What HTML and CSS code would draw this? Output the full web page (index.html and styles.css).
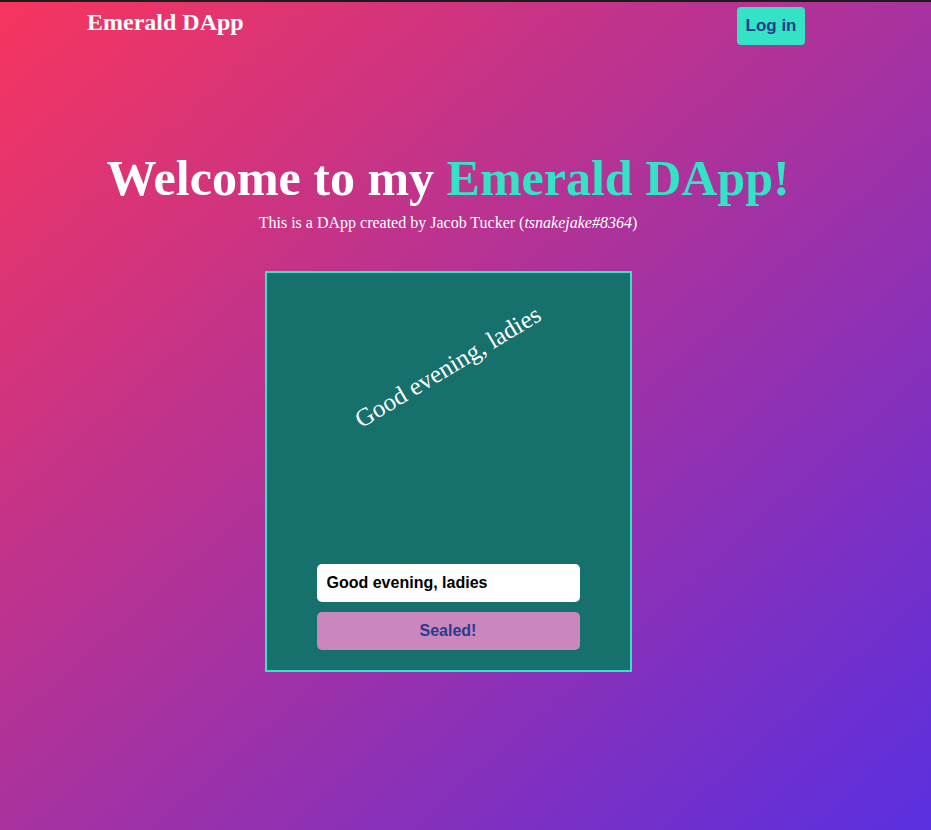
FILE: index.html
```html
<!DOCTYPE html>
<html>
<head>
<meta charset="utf-8">
<link rel="stylesheet" href="styles.css">
</head>
<body>
<div class="page">
  <nav class="nav">
    <h1 class="brand">Emerald DApp</h1>
    <button class="login">Log in</button>
  </nav>
  <main class="main">
    <h2 class="title">Welcome to my <span class="accent">Emerald DApp!</span></h2>
    <p class="subtitle">This is a DApp created by Jacob Tucker (<i>tsnakejake#8364</i>)</p>
    <section class="card">
      <div class="stage">
        <p class="greeting">Good evening, ladies</p>
      </div>
      <div class="form">
        <input class="field" type="text" value="Good evening, ladies">
        <button class="seal">Sealed!</button>
      </div>
    </section>
  </main>
</div>
</body>
</html>
```
FILE: styles.css
```css
html, body {
  margin: 0;
  padding: 0;
  height: 100%;
}
body {
  background: linear-gradient(to bottom right, #f7355e, #5a2fe0);
  border-top: 2px solid #1c1c1c;
  box-sizing: border-box;
  font-family: "Liberation Serif", "Times New Roman", serif;
  color: #fff;
  overflow: hidden;
}
.page {
  width: 896px;
}
.nav {
  display: flex;
  justify-content: space-between;
  align-items: flex-start;
  padding: 0 91px 0 87px;
}
.brand {
  margin: 6px 0 0;
  font-size: 24px;
  font-weight: bold;
  line-height: 28px;
}
.login {
  margin-top: 5px;
  height: 38px;
  width: 68px;
  padding: 0;
  border: none;
  border-radius: 4px;
  background: #34e2c6;
  color: #2a3a8c;
  font-family: "Liberation Sans", Arial, sans-serif;
  font-size: 17px;
  font-weight: bold;
}
.main {
  display: flex;
  flex-direction: column;
  align-items: center;
}
.title {
  margin: 103px 0 0;
  font-size: 50px;
  line-height: 60px;
  font-weight: bold;
}
.accent {
  color: #34e2c6;
}
.subtitle {
  margin: 6px 0 0;
  font-size: 16px;
  line-height: 18px;
}
.card {
  margin-top: 39px;
  width: 263px;
  height: 377px;
  border: 2px solid #38e0c4;
  background: #16706c;
  display: flex;
  flex-direction: column;
  padding: 0 50px 20px;
  box-sizing: content-box;
}
.stage {
  flex: 1;
  position: relative;
}
.greeting {
  position: absolute;
  left: 50%;
  top: 94px;
  margin: 0;
  white-space: nowrap;
  font-size: 25px;
  transform: translate(-50%, -50%) rotate(-31deg);
}
.form {
  display: flex;
  flex-direction: column;
  gap: 10px;
}
.field {
  height: 38px;
  box-sizing: border-box;
  border: none;
  border-radius: 5px;
  padding: 0 10px;
  font-family: "Liberation Sans", Arial, sans-serif;
  font-size: 16px;
  font-weight: bold;
  color: #000;
  background: #fff;
}
.seal {
  height: 38px;
  border: none;
  border-radius: 5px;
  background: #c987bd;
  color: #2b3a8c;
  font-family: "Liberation Sans", Arial, sans-serif;
  font-size: 16px;
  font-weight: bold;
}
```
